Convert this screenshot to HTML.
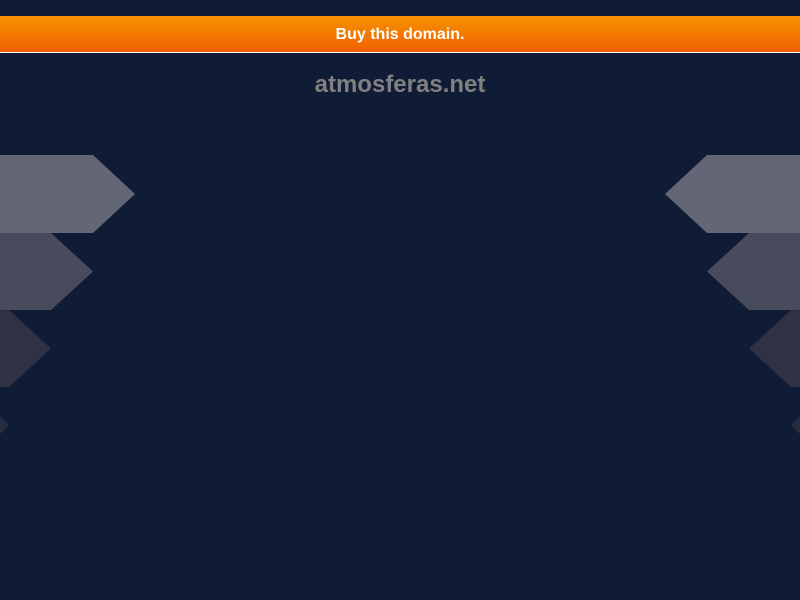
<!DOCTYPE html>
<html><head><meta charset="utf-8"><style>
html,body{margin:0;padding:0;width:800px;height:600px;overflow:hidden;background:#101c36;font-family:"Liberation Sans",Arial,sans-serif}
.bar{position:absolute;left:0;top:16px;width:800px;height:34px;padding-top:2px;background:linear-gradient(#f79200,#f06000);border-bottom:1px solid #fff;color:#fff;font-weight:bold;font-size:16px;text-align:center;line-height:34px}
.t{position:absolute;left:0;top:71px;width:800px;text-align:center;color:#808080;font-weight:bold;font-size:24px}
svg{position:absolute;left:0;top:0}
</style></head><body>
<svg width="800" height="600">
<polygon points="0,155 93,155 135,194 93,233 0,233" fill="#636775"/>
<polygon points="0,233 51,233 93,271.5 51,310 0,310" fill="#484b5b"/>
<polygon points="0,310 9,310 51,348.5 9,387 0,387" fill="#2e3244"/>
<polygon points="0,416 9,425 0,434" fill="#262b3f"/>
<polygon points="800,155 707,155 665,194 707,233 800,233" fill="#636775"/>
<polygon points="800,233 749,233 707,271.5 749,310 800,310" fill="#484b5b"/>
<polygon points="800,310 791,310 749,348.5 791,387 800,387" fill="#2e3244"/>
<polygon points="800,416 791,425 800,434" fill="#262b3f"/>
</svg>
<div class="bar">Buy this domain.</div>
<div class="t">atmosferas.net</div>
</body></html>
